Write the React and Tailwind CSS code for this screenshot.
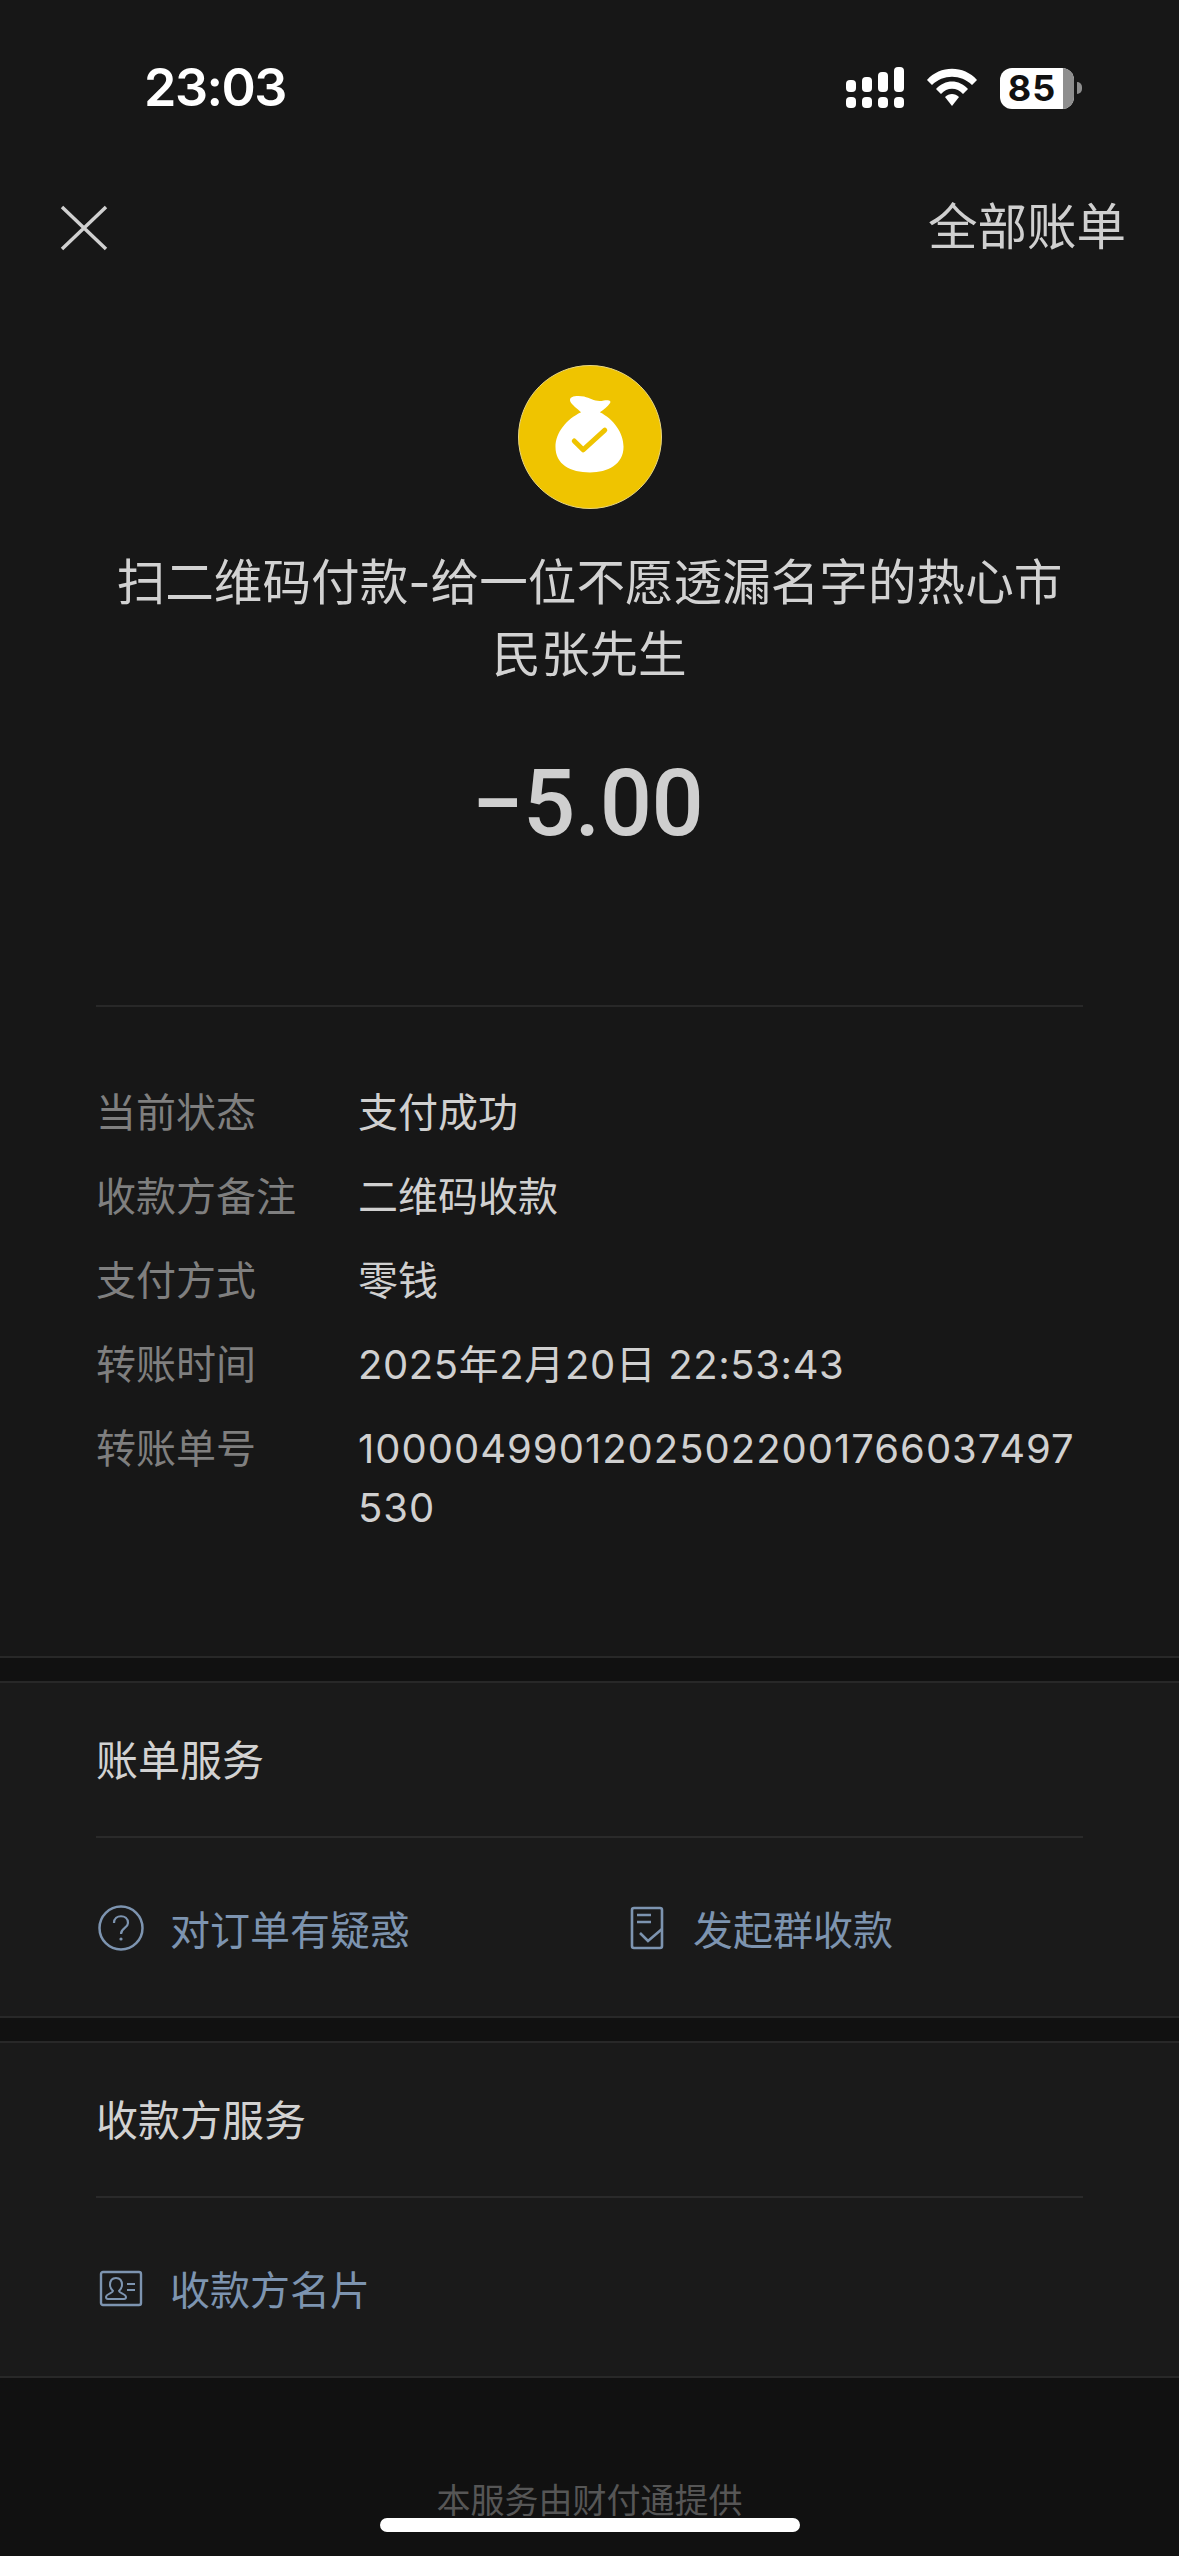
// App.jsx
import React from "react";

const font = { fontFamily: '"Noto Sans CJK SC", sans-serif' };
const numFont = { fontFamily: '"Inter", "Noto Sans CJK SC", sans-serif' };

const SignalIcon = () => (
  <svg width="60" height="42" viewBox="0 0 60 42" fill="white">
    <rect x="0" y="13" width="10" height="12" rx="4" />
    <rect x="16" y="10" width="10" height="15" rx="4" />
    <rect x="32" y="5" width="10" height="20" rx="4" />
    <rect x="48" y="0" width="10" height="25" rx="4" />
    <rect x="0" y="30" width="10" height="11" rx="4" />
    <rect x="16" y="30" width="10" height="11" rx="4" />
    <rect x="32" y="30" width="10" height="11" rx="4" />
    <rect x="48" y="30" width="10" height="11" rx="4" />
  </svg>
);

const WifiIcon = () => (
  <svg width="52" height="40" viewBox="0 0 52 40" fill="white">
    <path d="M1 12 C14 -3 38 -3 51 12 L46 17 C35 6 17 6 6 17 Z" />
    <path d="M10 21 C19 11 33 11 42 21 L37 26 C31 19 21 19 15 26 Z" />
    <path d="M19 29 C23 25 29 25 33 29 L26 38 Z" />
  </svg>
);

const Battery = () => (
  <div className="flex items-center gap-[3px] ml-[2px]">
    <div className="relative w-[74px] h-[41px] rounded-[12px] overflow-hidden bg-white flex items-center justify-center pr-[10px]">
      <div className="absolute right-0 top-0 bottom-0 w-[11px] bg-[#8e8e8e]" />
      <span className="text-[36px] leading-none font-bold text-[#111] tracking-[1px]" style={{ fontFamily: '"Inter", sans-serif' }}>85</span>
    </div>
    <div className="w-[5px] h-[12px] rounded-r-full bg-[#8e8e8e]" />
  </div>
);

const BagLogo = () => (
  <div className="w-[144px] h-[144px] rounded-full bg-[#efc400] border border-[#e9d67f] shrink-0">
    <svg width="142" height="142" viewBox="0 0 144 144">
      <path
        fill="white"
        d="M52 36 C50 30 60 30 66 31 C73 33 78 37 86 35 C92 34 94 36 92 38 C90 41 86 44 82 47 C96 54 106 68 106 82 C106 100 90 108 72 108 C52 108 37 100 37 82 C37 68 48 54 63 47 C59 43 54 40 52 36 Z"
      />
      <path d="M56 76 L65 85 L87 65" fill="none" stroke="#efc400" strokeWidth="5" strokeLinecap="round" strokeLinejoin="round" />
    </svg>
  </div>
);

const QuestionIcon = () => (
  <svg width="46" height="46" viewBox="0 0 46 46" fill="none" stroke="#7d94b0" strokeWidth="2.5">
    <circle cx="23" cy="23" r="21.5" />
    <path d="M16 18 C16 9 30 9 30 18 C30 23 23 23 23 29" strokeWidth="2.2" />
    <circle cx="23" cy="34" r="1.6" fill="#7d94b0" stroke="none" />
  </svg>
);

const CheckDocIcon = () => (
  <svg width="34" height="44" viewBox="0 0 34 44" fill="none" stroke="#7d94b0" strokeWidth="2.6">
    <rect x="2" y="2" width="30" height="40" rx="2" />
    <path d="M7 9 H21 M7 16 H21" />
    <path d="M10 27 L18 35 L32 23" />
  </svg>
);

const CardIcon = () => (
  <svg width="44" height="37" viewBox="0 0 44 37" fill="none" stroke="#7d94b0" strokeWidth="2.4">
    <rect x="2" y="2" width="40" height="33" rx="2" />
    <path d="M17 8 C12 8 11 12 11 15 C11 18 13 20 14 21 C14 23 7 24 7 27 C7 28.500 8 29 9 29 H25 C26 29 27 28.500 27 27 C27 24 20 23 20 21 C21 20 23 18 23 15 C23 12 22 8 17 8 Z" strokeWidth="2" />
    <path d="M28 14 H36 M28 20 H36" strokeWidth="2" />
  </svg>
);

const details = [
  ["当前状态", "支付成功", ""],
  ["收款方备注", "二维码收款", ""],
  ["支付方式", "零钱", ""],
  ["转账时间", "2025年2月20日 22:53:43", "tracking-[0.6px]"],
  ["转账单号", "10000499012025022001766037497530", "tracking-[1px]"],
];

const Section = ({ title, children }) => (
  <section className="h-[337px] border-y-2 border-[#282828] bg-[#1a1a1a] px-[96px]">
    <div className="h-[155px] pb-[4px] border-b-2 border-[#2a2a2a] flex items-center text-[42px] text-[#d2d2d2]">{title}</div>
    {children}
  </section>
);

const Action = ({ icon, label, className }) => (
  <div className={`flex items-center text-[40px] text-[#7d94b0] ${className}`}>
    {icon}
    <span>{label}</span>
  </div>
);

export default function App() {
  return (
    <div className="relative w-[1179px] h-[2556px] overflow-hidden bg-[#171717] flex flex-col" style={font}>
      {/* status bar */}
      <div className="h-[175px] flex items-start justify-between pt-[60px] pl-[144px] pr-[97px]">
        <span className="text-[52px] leading-[56px] font-semibold text-white tracking-[-1.5px]" style={{ fontFamily: '"Inter", sans-serif' }}>23:03</span>
        <div className="flex items-center gap-[20px] pt-[7px]">
          <SignalIcon />
          <WifiIcon />
          <Battery />
        </div>
      </div>

      {/* nav */}
      <div className="h-[106px] flex items-center justify-between pl-[60px] pr-[53px]">
        <svg width="48" height="46" viewBox="0 0 48 46" stroke="#d0d0d0" strokeWidth="3.500">
          <path d="M2 2 L46 44 M46 2 L2 44" />
        </svg>
        <span className="text-[49.5px] leading-none text-[#cfcfcf] mb-[8px]">全部账单</span>
      </div>

      {/* head */}
      <div className="flex flex-col items-center pt-[84px]">
        <BagLogo />
        <div className="w-[970px] h-[144px] mt-[34px] text-center text-[48.6px] leading-[72px] text-[#d2d2d2]">
          扫二维码付款<span className="leading-none" style={numFont}>-</span>给一位不愿透漏名字的热心市民张先生
        </div>
        <div className="mt-[62px] mr-[4px] text-[92px] leading-[110px] font-medium text-[#cfcfcf] tracking-[-0.5px]" style={{ fontFamily: '"Roboto", sans-serif' }}>
          −5.00
        </div>
      </div>

      {/* detail list */}
      <div className="mx-[96px] mt-[146px] border-t-2 border-[#282828] pt-[76px] h-[651px]">
        {details.map(([label, value, tracking]) => (
          <div key={label} className="flex mb-[25px] text-[40px] leading-[59px]" style={numFont}>
            <div className="w-[262px] shrink-0 text-[#7f7f7f]">{label}</div>
            <div className={`flex-1 text-[#d0d0d0] break-all ${tracking}`}>{value}</div>
          </div>
        ))}
      </div>

      <div className="h-[25px] bg-[#111111] border-t-2 border-[#282828]" />
      <Section title="账单服务">
        <div className="h-[178px] pt-[2px] flex items-center">
          <Action icon={<QuestionIcon />} label="对订单有疑惑" className="w-[534px] gap-[26px] pl-[2px]" />
          <Action icon={<CheckDocIcon />} label="发起群收款" className="gap-[29px]" />
        </div>
      </Section>
      <div className="h-[23px] bg-[#111111]" />
      <Section title="收款方服务">
        <div className="h-[178px] pt-[2px] flex items-center">
          <Action icon={<CardIcon />} label="收款方名片" className="gap-[27px] pl-[3px]" />
        </div>
      </Section>

      {/* footer */}
      <div className="flex-1 bg-[#111111] flex justify-center pt-[97px]">
        <span className="text-[34px] leading-[48px] text-[#565656]">本服务由财付通提供</span>
      </div>

      <div className="absolute left-[380px] top-[2518px] w-[420px] h-[14px] rounded-[7px] bg-white" />
    </div>
  );
}
